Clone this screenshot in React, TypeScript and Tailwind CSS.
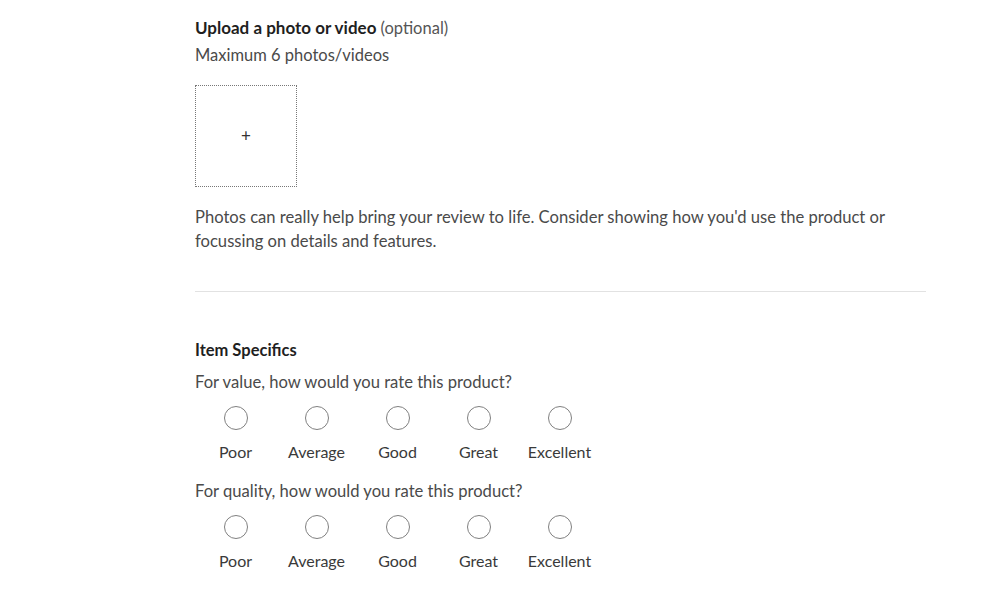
import React from 'react';

const options = ['Poor', 'Average', 'Good', 'Great', 'Excellent'];

const RatingRow = ({ name }: { name: string }) => (
  <div className="grid grid-cols-[repeat(5,81px)]">
    {options.map((opt) => (
      <label key={opt} className="flex flex-col items-center cursor-pointer">
        <span className="mt-3 w-6 h-6 rounded-full border-[1.5px] border-[#808080] bg-white" />
        <input type="radio" name={name} value={opt} className="sr-only" />
        <span className="mt-[10px] leading-6 text-[16px] text-[#3a3a3a]">{opt}</span>
      </label>
    ))}
  </div>
);

export default function App() {
  return (
    <div className="min-h-screen bg-white" style={{ fontFamily: 'Lato, "Open Sans", sans-serif' }}>
      <div className="pl-[195px] pt-4 w-[926px]">
        <h3 className="leading-6 text-[17px] font-bold text-[#1f1f1f]">
          Upload a photo or video <span className="font-normal text-[16.5px] text-[#555]">(optional)</span>
        </h3>
        <p className="mt-[3px] leading-6 text-[16.5px] text-[#4a4a4a]">Maximum 6 photos/videos</p>

        <button className="mt-[18px] w-[102px] h-[102px] border border-dotted border-[#777] flex items-center justify-center text-[17px] text-[#333] bg-white">
          +
        </button>

        <p className="mt-[18px] leading-6 text-[16.6px] text-[#4a4a4a] max-w-[710px]">
          Photos can really help bring your review to life. Consider showing how you'd use the product or focussing on details and features.
        </p>

        <hr className="mt-[38px] border-0 border-t border-[#e2e2e2]" />

        <h3 className="mt-[46px] leading-6 text-[16.5px] font-bold text-[#1f1f1f]">Item Specifics</h3>

        <p className="mt-2 leading-6 text-[16.6px] text-[#4a4a4a]">For value, how would you rate this product?</p>
        <RatingRow name="value" />

        <p className="mt-[15px] leading-6 text-[16.6px] text-[#4a4a4a]">For quality, how would you rate this product?</p>
        <RatingRow name="quality" />
      </div>
    </div>
  );
}
